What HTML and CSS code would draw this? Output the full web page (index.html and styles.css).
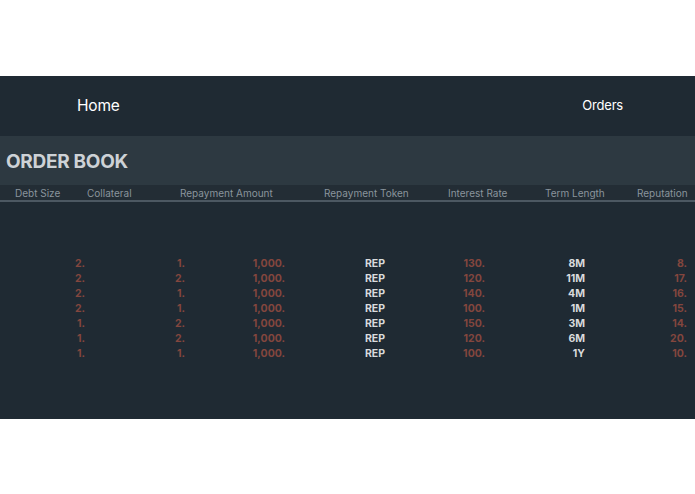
FILE: index.html
```html
<!DOCTYPE html>
<html>
<head>
<meta charset="utf-8">
<title>Order Book</title>
<link rel="stylesheet" href="styles.css">
</head>
<body>
<div class="app">
  <nav class="nav">
    <a class="nav-home">Home</a>
    <a class="nav-orders">Orders</a>
  </nav>
  <div class="title-band">
    <h1 class="title">ORDER BOOK</h1>
  </div>
  <div class="head-row">
    <span>Debt Size</span>
    <span>Collateral</span>
    <span>Repayment Amount</span>
    <span>Repayment Token</span>
    <span>Interest Rate</span>
    <span>Term Length</span>
    <span>Reputation</span>
  </div>
  <div class="rows">
    <div class="row"><span class="num">2.</span><span class="num">1.</span><span class="num">1,000.</span><span class="txt">REP</span><span class="num">130.</span><span class="txt">8M</span><span class="num">8.</span></div>
    <div class="row"><span class="num">2.</span><span class="num">2.</span><span class="num">1,000.</span><span class="txt">REP</span><span class="num">120.</span><span class="txt">11M</span><span class="num">17.</span></div>
    <div class="row"><span class="num">2.</span><span class="num">1.</span><span class="num">1,000.</span><span class="txt">REP</span><span class="num">140.</span><span class="txt">4M</span><span class="num">16.</span></div>
    <div class="row"><span class="num">2.</span><span class="num">1.</span><span class="num">1,000.</span><span class="txt">REP</span><span class="num">100.</span><span class="txt">1M</span><span class="num">15.</span></div>
    <div class="row"><span class="num">1.</span><span class="num">2.</span><span class="num">1,000.</span><span class="txt">REP</span><span class="num">150.</span><span class="txt">3M</span><span class="num">14.</span></div>
    <div class="row"><span class="num">1.</span><span class="num">2.</span><span class="num">1,000.</span><span class="txt">REP</span><span class="num">120.</span><span class="txt">6M</span><span class="num">20.</span></div>
    <div class="row"><span class="num">1.</span><span class="num">1.</span><span class="num">1,000.</span><span class="txt">REP</span><span class="num">100.</span><span class="txt">1Y</span><span class="num">10.</span></div>
  </div>
</div>
</body>
</html>
```
FILE: styles.css
```css
html, body {
  margin: 0;
  padding: 0;
  background: #ffffff;
}

body {
  padding-top: 76px;
  font-family: Inter, "Liberation Sans", sans-serif;
}

.app {
  height: 343px;
  background: #1f2a33;
  overflow: hidden;
}

.nav {
  height: 60px;
  display: flex;
  align-items: center;
  justify-content: space-between;
  padding: 0 72px 0 77px;
  background: #1f2a33;
  color: #ffffff;
}

.nav-home {
  font-size: 15.5px;
  letter-spacing: -0.2px;
  padding-bottom: 2px;
}

.nav-orders {
  font-size: 13px;
  letter-spacing: -0.2px;
  padding-bottom: 2px;
}

.title-band {
  height: 49px;
  display: flex;
  align-items: center;
  padding: 2px 0 0 6px;
  box-sizing: border-box;
  background: #2d3941;
}

.title {
  margin: 0;
  font-size: 19px;
  font-weight: 700;
  letter-spacing: -0.3px;
  color: #cdd2d6;
}

.head-row {
  height: 15px;
  display: grid;
  grid-template-columns: 72px 93px 144px 124px 97px 92px 1fr;
  align-items: center;
  padding-left: 15px;
  background: #232d35;
  border-bottom: 2px solid #4c5862;
  font-size: 10px;
  color: #8a949c;
  white-space: nowrap;
}

.rows {
  padding-top: 54px;
}

.row {
  height: 15px;
  display: grid;
  grid-template-columns: repeat(7, 100px);
  align-items: center;
  font-size: 10.5px;
  font-weight: 700;
}

.row span {
  text-align: right;
  padding-right: 15px;
}

.row span:last-child {
  padding-right: 13px;
}

.num {
  color: #83463e;
}

.txt {
  color: #d9dbdd;
}
```
